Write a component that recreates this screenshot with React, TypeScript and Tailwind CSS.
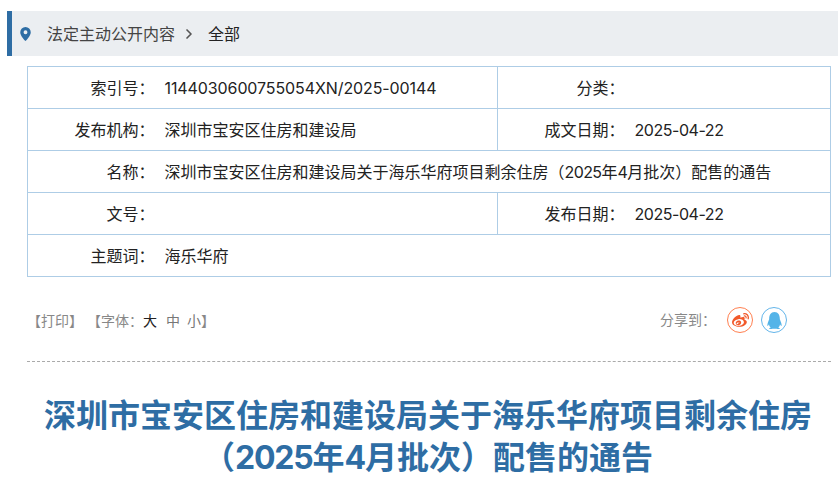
import { type ReactNode, type JSX } from 'react'
import { FaWeibo, FaQq } from 'react-icons/fa'
import { ChevronRight } from 'lucide-react'

const font = 'font-["Inter","Noto_Sans_CJK_SC",sans-serif]'

function Label({ children }: { children: ReactNode }): JSX.Element {
  return <td className="pr-[2px] text-right">{children}</td>
}

export default function App(): JSX.Element {
  return (
    <div className={`${font} h-[487px] overflow-hidden bg-white text-[#222222]`}>
      <div className="pt-[11px] pl-[7px]">
        <div className="flex h-[45px] items-center border-l-[5px] border-[#2e6da4] bg-[#ebeef1] text-base">
          <svg viewBox="0 0 12 16" className="ml-[8px] h-[14px] w-[11px] fill-[#2e6da4]">
            <path
              fillRule="evenodd"
              d="M6 0a6 6 0 0 1 6 6c0 3.500-3.400 7.600-6 10C3.400 13.600 0 9.500 0 6a6 6 0 0 1 6-6zm0 3.800a2.200 2.200 0 1 0 0 4.400 2.200 2.200 0 0 0 0-4.400z"
            />
          </svg>
          <span className="ml-[16px] text-[#444444]">法定主动公开内容</span>
          <ChevronRight size={16} strokeWidth={2.5} className="ml-[6px] text-[#555555]" />
          <span className="ml-[11px] text-[#222222]">全部</span>
        </div>
      </div>

      <div className="mt-[10px] pl-[27px]">
        <table className="w-[803px] table-fixed border-collapse border border-[#aecde6] text-base">
          <colgroup>
            <col className="w-[129px]" />
            <col className="w-[341px]" />
            <col className="w-[129px]" />
            <col className="w-[204px]" />
          </colgroup>
          <tbody>
            <tr className="h-[42px] border-b border-[#aecde6]">
              <Label>索引号：</Label>
              <td className="border-r border-[#aecde6] pl-[8px] tracking-[-0.1px]">
                1144030600755054XN/2025-00144
              </td>
              <Label>分类：</Label>
              <td className="pl-[8px]"></td>
            </tr>
            <tr className="h-[42px] border-b border-[#aecde6]">
              <Label>发布机构：</Label>
              <td className="border-r border-[#aecde6] pl-[8px]">深圳市宝安区住房和建设局</td>
              <Label>成文日期：</Label>
              <td className="pl-[8px] tracking-[-0.45px]">2025-04-22</td>
            </tr>
            <tr className="h-[42px] border-b border-[#aecde6]">
              <Label>名称：</Label>
              <td colSpan={3} className="pl-[8px]">
                深圳市宝安区住房和建设局关于海乐华府项目剩余住房（
                <span className="tracking-[-0.6px]">2025</span>年
                <span className="tracking-[-0.6px]">4</span>月批次）配售的通告
              </td>
            </tr>
            <tr className="h-[42px] border-b border-[#aecde6]">
              <Label>文号：</Label>
              <td className="border-r border-[#aecde6] pl-[8px]"></td>
              <Label>发布日期：</Label>
              <td className="pl-[8px] tracking-[-0.45px]">2025-04-22</td>
            </tr>
            <tr className="h-[42px]">
              <Label>主题词：</Label>
              <td colSpan={3} className="pl-[8px]">海乐华府</td>
            </tr>
          </tbody>
        </table>
      </div>

      <div className="mx-[27px] mr-[7px] flex h-[85px] items-center justify-between border-b border-dashed border-[#aaaaaa]">
        <div className="flex pt-[4px] text-[14px] leading-[20px] text-[#888888]">
          <span>【打印】</span>
          <span className="ml-[4px]">【字体：</span>
          <span className="text-[#222222]">大</span>
          <span className="ml-[9px] text-[#777777]">中</span>
          <span className="ml-[7px] text-[#777777]">小</span>
          <span>】</span>
        </div>
        <div className="mr-[44px] flex items-center pt-[2px]">
          <span className="text-[14px] leading-[20px] text-[#888888]">分享到：</span>
          <span className="ml-[11px] flex h-[26px] w-[26px] items-center justify-center rounded-full border border-[#ff7f50] text-[#f2592a]">
            <FaWeibo size={17} />
          </span>
          <span className="ml-[8px] flex h-[26px] w-[26px] items-center justify-center rounded-full border border-[#63b5ea] text-[#54b4e8]">
            <FaQq size={17} />
          </span>
        </div>
      </div>

      <h1 className="mt-[33px] ml-[26px] w-[804px] text-center text-[32px] leading-[42px] font-bold text-[#2e6da4]">
        深圳市宝安区住房和建设局关于海乐华府项目剩余住房
        <br />
        （<span className="tracking-[-1.2px]">2025</span>年
        <span className="tracking-[-1.2px]">4</span>月批次）配售的通告
      </h1>
    </div>
  )
}
